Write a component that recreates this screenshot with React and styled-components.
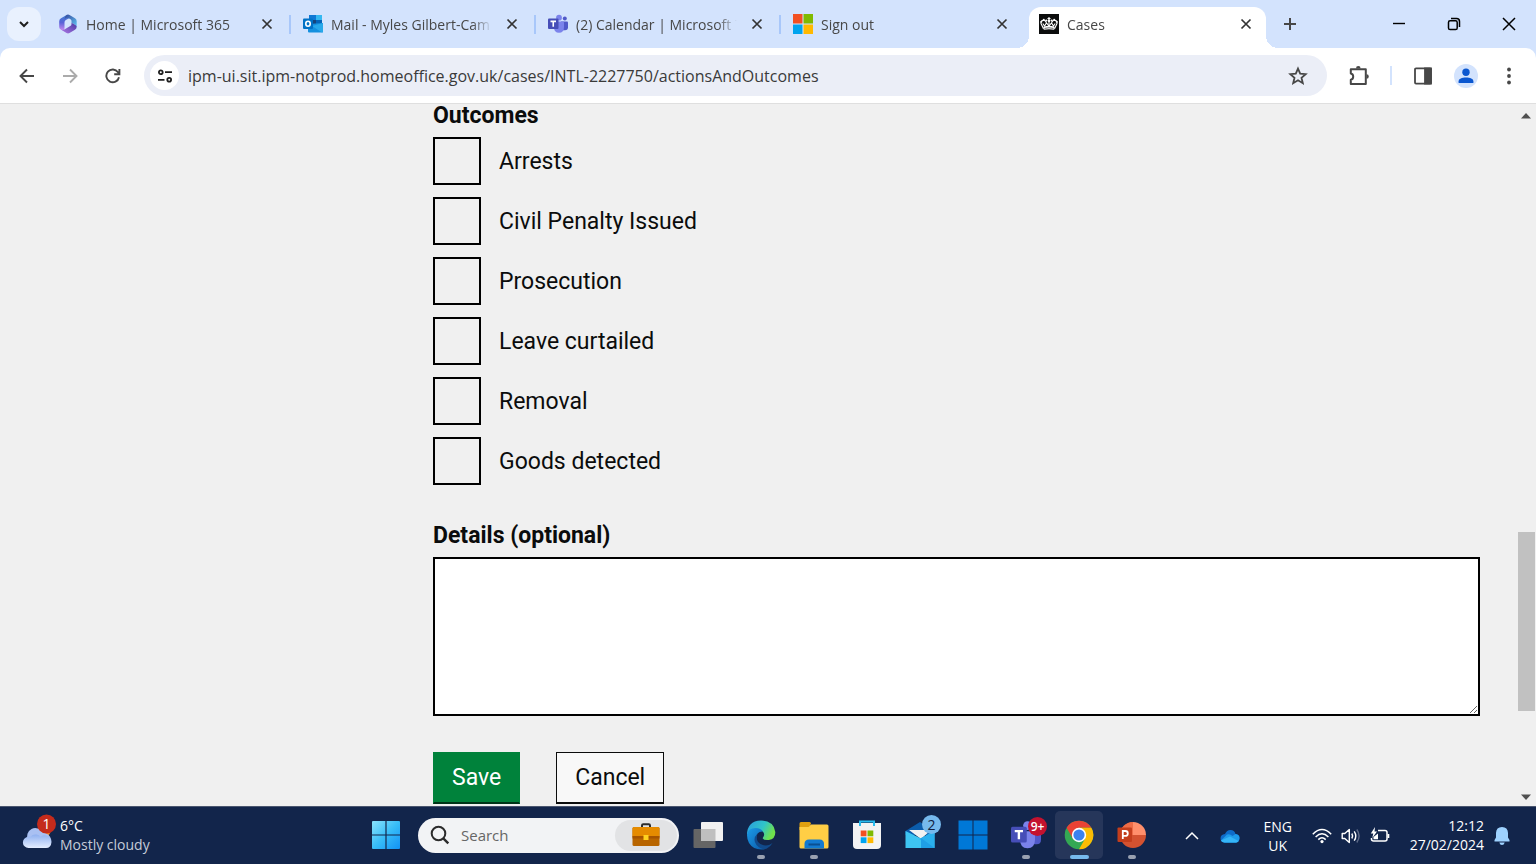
import React, { useState } from "react";
import styled, { createGlobalStyle, css } from "styled-components";

const OUTCOMES = [
    "Arrests",
    "Civil Penalty Issued",
    "Prosecution",
    "Leave curtailed",
    "Removal",
    "Goods detected",
];

const App = () => {
    const [checked, setChecked] = useState({});
    const [details, setDetails] = useState("");

    const toggle = (name) => {
        setChecked({ ...checked, [name]: !checked[name] });
    }

    return (
        <>
            <GlobalStyle />

            <Screen>
                <TabStrip>
                    <TabSearch aria-label="Search tabs">
                        <svg width="12" height="12" viewBox="0 0 12 12" fill="none" stroke="#1f1f1f" strokeWidth="2">
                            <path d="M2 4l4 4 4-4" />
                        </svg>
                    </TabSearch>

                    <Tabs>
                        <BrowserTab icon={<M365Icon />} title="Home | Microsoft 365" />
                        <BrowserTab icon={<OutlookIcon />} title="Mail - Myles Gilbert-Cam" />
                        <BrowserTab icon={<TeamsIcon size={20} />} title="(2) Calendar | Microsoft T" />
                        <BrowserTab icon={<MicrosoftIcon />} title="Sign out" last />
                        <BrowserTab icon={<CrownIcon />} title="Cases" active />
                    </Tabs>

                    <NewTab aria-label="New tab">
                        <svg width="14" height="14" viewBox="0 0 14 14" stroke="#474747" strokeWidth="2">
                            <path d="M7 1v12M1 7h12" />
                        </svg>
                    </NewTab>

                    <WindowControls>
                        <WindowButton aria-label="Minimise">
                            <svg width="14" height="14" viewBox="0 0 14 14" stroke="#000" strokeWidth="1.4">
                                <path d="M1 6.5h12" />
                            </svg>
                        </WindowButton>
                        <WindowButton aria-label="Restore">
                            <svg width="14" height="14" viewBox="0 0 14 14" fill="none" stroke="#000" strokeWidth="1.5">
                                <rect x="1.5" y="3.8" width="8.7" height="8.7" rx="1.6" />
                                <path d="M4 1.6h5.6a2.9 2.9 0 0 1 2.9 2.9V10" />
                            </svg>
                        </WindowButton>
                        <WindowButton aria-label="Close">
                            <svg width="14" height="14" viewBox="0 0 14 14" stroke="#000" strokeWidth="1.5">
                                <path d="M1 1l12 12M13 1L1 13" />
                            </svg>
                        </WindowButton>
                    </WindowControls>
                </TabStrip>

                <Toolbar>
                    <ToolButton aria-label="Back">
                        <svg width="16" height="16" viewBox="0 0 16 16" fill="none" stroke="#474747" strokeWidth="1.9">
                            <path d="M15 8H2M8 1.5L1.5 8 8 14.5" />
                        </svg>
                    </ToolButton>
                    <ToolButton aria-label="Forward">
                        <svg width="16" height="16" viewBox="0 0 16 16" fill="none" stroke="#ababab" strokeWidth="1.9">
                            <path d="M1 8h13M8 1.5L14.5 8 8 14.5" />
                        </svg>
                    </ToolButton>
                    <ToolButton aria-label="Reload">
                        <svg width="16" height="16" viewBox="0 0 16 16" fill="none" stroke="#474747" strokeWidth="1.9">
                            <path d="M14 9.2A6.4 6.4 0 1 1 13 4.2L14.4 6M14.4 1v5.2H9.2" />
                        </svg>
                    </ToolButton>

                    <AddressBar>
                        <SiteInfo aria-label="View site information">
                            <svg width="16" height="16" viewBox="0 0 16 16" fill="none" stroke="#1f1f1f" strokeWidth="1.8">
                                <circle cx="3.8" cy="4.2" r="1.9" />
                                <path d="M8 4.2h7M1 11.8h6.5" />
                                <circle cx="12.2" cy="11.8" r="1.9" />
                            </svg>
                        </SiteInfo>
                        <AddressInput
                            aria-label="Address"
                            defaultValue="ipm-ui.sit.ipm-notprod.homeoffice.gov.uk/cases/INTL-2227750/actionsAndOutcomes"
                        />
                        <StarButton aria-label="Bookmark this tab">
                            <svg width="20" height="20" viewBox="0 0 20 20" fill="none" stroke="#474747" strokeWidth="1.8">
                                <path d="M10 2.6l2.2 5 5.5.5-4.2 3.7 1.3 5.4-4.8-2.9-4.8 2.9 1.3-5.4L2.3 8.1l5.5-.5z" />
                            </svg>
                        </StarButton>
                    </AddressBar>

                    <ToolActions>
                        <ToolButton aria-label="Extensions">
                            <svg width="22" height="22" viewBox="0 0 22 22" fill="none" stroke="#474747" strokeWidth="2">
                                <path d="M2.8 4.2h15V19h-15v-4.200c3.2-.4 3.2-6 0-6.4z" strokeLinejoin="round" />
                                <path d="M8 3.4a2.3 2.3 0 0 1 4.6 0zM18.500 9.200a2.300 2.300 0 0 1 0 4.600z" fill="#474747" stroke="none" />
                            </svg>
                        </ToolButton>
                        <ToolDivider />
                        <ToolButton aria-label="Side panel">
                            <svg width="18" height="18" viewBox="0 0 18 18" fill="none" stroke="#474747" strokeWidth="1.8">
                                <rect x="1" y="1.4" width="16" height="15.2" rx="1" />
                                <path d="M11 1.4h6v15.2h-6z" fill="#474747" />
                            </svg>
                        </ToolButton>
                        <ProfileButton aria-label="Profile">
                            <svg width="16" height="16" viewBox="0 0 16 16" fill="#0b57d0">
                                <circle cx="8" cy="4.3" r="3.7" />
                                <path d="M.6 15v-1.800C.6 10.600 4 9.400 8 9.400s7.400 1.200 7.400 3.800V15z" />
                            </svg>
                        </ProfileButton>
                        <ToolButton aria-label="Menu">
                            <svg width="18" height="18" viewBox="0 0 18 18" fill="#474747">
                                <circle cx="9" cy="2.5" r="1.9" />
                                <circle cx="9" cy="9" r="1.9" />
                                <circle cx="9" cy="15.5" r="1.9" />
                            </svg>
                        </ToolButton>
                    </ToolActions>
                </Toolbar>

                <Viewport>
                    <Page>
                        <Form onSubmit={(e) => e.preventDefault()}>
                            <Fieldset>
                                <Legend>Outcomes</Legend>
                                <CheckList>
                                    {OUTCOMES.map((name) => (
                                        <CheckRow key={name}>
                                            <CheckBox
                                                type="checkbox"
                                                checked={!!checked[name]}
                                                onChange={() => toggle(name)}
                                            />
                                            <CheckText>{name}</CheckText>
                                        </CheckRow>
                                    ))}
                                </CheckList>
                            </Fieldset>

                            <DetailsLabel htmlFor="details">Details (optional)</DetailsLabel>
                            <DetailsBox
                                id="details"
                                value={details}
                                onChange={(e) => setDetails(e.target.value)}
                            />

                            <ButtonRow>
                                <SaveButton type="submit">Save</SaveButton>
                                <CancelButton type="button">Cancel</CancelButton>
                            </ButtonRow>
                        </Form>
                    </Page>

                    <ScrollBar>
                        <svg width="10" height="6" viewBox="0 0 10 6" fill="#505050"><path d="M0 5.5L5 0l5 5.5z" /></svg>
                        <ScrollTrack>
                            <ScrollThumb />
                        </ScrollTrack>
                        <svg width="10" height="6" viewBox="0 0 10 6" fill="#505050"><path d="M0 .5L5 6l5-5.5z" /></svg>
                    </ScrollBar>
                </Viewport>

                <TaskBar>
                    <Weather>
                        <WeatherIcon />
                        <WeatherInfo>
                            6°C
                            <WeatherText>Mostly cloudy</WeatherText>
                        </WeatherInfo>
                    </Weather>

                    <TaskApps>
                        <TaskApp aria-label="Start"><StartIcon /></TaskApp>
                        <SearchBox>
                            <svg width="20" height="20" viewBox="0 0 20 20" fill="none" stroke="#2b2b2b" strokeWidth="2">
                                <circle cx="8.5" cy="8.5" r="6.8" />
                                <path d="M13.3 13.3l5 5" strokeWidth="2.4" />
                            </svg>
                            <SearchInput aria-label="Search" placeholder="Search" />
                            <SearchHighlight><BriefcaseIcon /></SearchHighlight>
                        </SearchBox>
                        <TaskApp aria-label="Task view"><TaskViewIcon /></TaskApp>
                        <TaskApp aria-label="Edge" $running><EdgeIcon /></TaskApp>
                        <TaskApp aria-label="File Explorer" $running><ExplorerIcon /></TaskApp>
                        <TaskApp aria-label="Store"><StoreIcon /></TaskApp>
                        <TaskApp aria-label="Mail"><MailIcon /><Badge>2</Badge></TaskApp>
                        <TaskApp aria-label="Windows"><WindowsIcon /></TaskApp>
                        <TaskApp aria-label="Teams" $running><TeamsIcon size={30} /><Badge $alert>9+</Badge></TaskApp>
                        <TaskApp aria-label="Chrome" $running $focused><ChromeIcon /></TaskApp>
                        <TaskApp aria-label="PowerPoint" $running><PowerPointIcon /></TaskApp>
                    </TaskApps>

                    <Tray>
                        <TrayButton aria-label="Show hidden icons">
                            <svg width="14" height="14" viewBox="0 0 14 14" fill="none" stroke="#fff" strokeWidth="1.5">
                                <path d="M1 10l6-6 6 6" />
                            </svg>
                        </TrayButton>
                        <TrayButton aria-label="OneDrive"><OneDriveIcon /></TrayButton>
                        <Language>ENG<br />UK</Language>
                        <Status aria-label="Network, volume and battery">
                            <WifiIcon />
                            <VolumeIcon />
                            <BatteryIcon />
                        </Status>
                        <Clock>12:12<br />27/02/2024</Clock>
                        <TrayButton aria-label="Notifications"><BellIcon /></TrayButton>
                    </Tray>
                </TaskBar>
            </Screen>
        </>
    )
}

export default App;

const BrowserTab = ({ icon, title, active, last }) => (
    <Tab $active={active} $last={last}>
        <TabLink href="#">
            {icon}
            <TabTitle>{title}</TabTitle>
        </TabLink>
        <TabClose aria-label={"Close " + title}>
            <svg width="12" height="12" viewBox="0 0 12 12" stroke="#333" strokeWidth="1.7">
                <path d="M1.5 1.5l9 9M10.5 1.5l-9 9" />
            </svg>
        </TabClose>
    </Tab>
)

/* icons */

const M365Icon = () => (
    <svg width="20" height="20" viewBox="0 0 20 20">
        <defs>
            <linearGradient id="m1" x1="0" y1="0" x2="0" y2="1">
                <stop offset="0" stopColor="#3f7fd0" />
                <stop offset=".5" stopColor="#5a62d8" />
                <stop offset="1" stopColor="#c98af0" />
            </linearGradient>
            <linearGradient id="m2" x1="0" y1="0" x2="1" y2="1">
                <stop offset="0" stopColor="#33459c" />
                <stop offset="1" stopColor="#62c8f5" />
            </linearGradient>
            <linearGradient id="m3" x1="0" y1="1" x2="1" y2="0">
                <stop offset="0" stopColor="#b07be8" />
                <stop offset="1" stopColor="#4636a0" />
            </linearGradient>
        </defs>
        <path d="M9 .8L3 4.2Q1.200 5.300 1.200 7.300v5.600q0 1.600 1.500 2.500l1.500.8Q6.500 17 6.500 14V8.500q0-1.600 1.400-2.400L11.500 4z" fill="url(#m1)" />
        <path d="M9 .8q1.200-.6 2.500.1L17 4.200q1.700 1 1.700 3v6.200q-.3-1.800-1.700-2.600L13.500 8.700V7q0-1.200-1-1.800l-1.800-1Q8 3 6.500 5.500 6.700 2 9 .8z" fill="url(#m2)" />
        <path d="M18.700 12.500q0 2.300-1.700 3.300l-5.500 3.200q-1.500.8-3 0l-5.700-3.400q2 .8 3.600-.1l5.900-3.400q1.200-.7 1.200-2.100V8.700l3.500 2.100q1.200.7 1.700 1.700z" fill="url(#m3)" />
    </svg>
)

const OutlookIcon = () => (
    <svg width="20" height="20" viewBox="0 0 20 20">
        <rect x="6" y="1" width="13" height="11" rx="1" fill="#28a8ea" />
        <path d="M6 1h7v5H6z" fill="#0f78d4" />
        <path d="M13 1h6v5h-6z" fill="#35b8f1" />
        <path d="M6 6h7v5H6z" fill="#14447d" />
        <path d="M13 6h6v5h-6z" fill="#0364b8" />
        <path d="M5 10l15-1v8.500q0 1-1 1H6q-1 0-1-1z" fill="#1490df" />
        <path d="M20 9v9q-.5.5-1 .5L9 12z" fill="#28a8ea" />
        <rect y="4.5" width="10" height="10.5" rx="1" fill="#0072c6" />
        <ellipse cx="5" cy="9.7" rx="2.2" ry="2.5" fill="none" stroke="#fff" strokeWidth="1.6" />
    </svg>
)

const TeamsIcon = ({ size }) => (
    <svg width={size} height={size} viewBox="0 0 20 20">
        <circle cx="16.8" cy="4.5" r="2" fill="#5059c9" />
        <path d="M13 7.500h6q1 0 1 1v4.700q0 3-3 3h-3z" fill="#5059c9" />
        <circle cx="11" cy="3.7" r="2.9" fill="#7b83eb" />
        <path d="M6 7.500h9q1 0 1 1V13q0 5.800-5 5.800T6 13z" fill="#7b83eb" />
        <rect y="4.5" width="10.5" height="10.5" rx="1" fill="#464eb8" />
        <path d="M2.500 7.400H8M5.250 7.400v5.400" stroke="#fff" strokeWidth="1.6" />
    </svg>
)

const MicrosoftIcon = () => (
    <svg width="20" height="20" viewBox="0 0 20 20">
        <path d="M0 0h9.500v9.500H0z" fill="#f25022" />
        <path d="M10.500 0H20v9.500h-9.500z" fill="#7fba00" />
        <path d="M0 10.500h9.500V20H0z" fill="#00a4ef" />
        <path d="M10.500 10.500H20V20h-9.500z" fill="#ffb900" />
    </svg>
)

const CrownIcon = () => (
    <svg width="20" height="20" viewBox="0 0 20 20">
        <path d="M0 0h20v20H0z" fill="#0b0c0c" />
        <g fill="none" stroke="#fff" strokeWidth="1.1">
            <path d="M4.500 14.800L2 9.600Q1.500 7 4 6.200q2.800 0 3.300 2.500M15.500 14.800L18 9.600q.5-2.600-2-3.400-2.800 0-3.300 2.500" />
            <path d="M10 3v9M8.500 4.500h3" />
            <path d="M3.800 9.500l1.700 2.500L7.500 9l2.500 3 2.500-3 2 3 1.700-2.500" />
        </g>
        <path d="M4.300 12.800q5.700-2 11.400 0l-.5 3q-5.200-1.300-10.400 0z" fill="#fff" />
        <path d="M5.500 14.400q4.500-1.200 9 0" fill="none" stroke="#0b0c0c" strokeWidth=".6" />
        <g fill="#fff">
            <circle cx="2.3" cy="7.8" r="1" /><circle cx="4.8" cy="5.8" r="1" /><circle cx="7.3" cy="6.5" r="1" />
            <circle cx="10" cy="6.8" r="1.4" />
            <circle cx="12.7" cy="6.5" r="1" /><circle cx="15.2" cy="5.8" r="1" /><circle cx="17.7" cy="7.8" r="1" />
        </g>
    </svg>
)

const WeatherIcon = () => (
    <svg width="34" height="44" viewBox="0 0 34 44">
        <defs>
            <linearGradient id="cloud" x1="0" y1="0" x2="0" y2="1">
                <stop offset="0" stopColor="#8fb0f0" />
                <stop offset="1" stopColor="#e4edff" />
            </linearGradient>
        </defs>
        <circle cx="22" cy="17" r="6.5" fill="#f58220" />
        <path d="M6 26a7.500 7.500 0 0 1 14.500-7.500Q28 19 29 26z" fill="#a9c0f2" />
        <path d="M6.500 34a5.600 5.600 0 0 1 0-11.200h2q2-2.800 6-2.300 3 .5 4 2.300 2-2.300 5.500-1.300 5.500 1 5.500 6.500-.5 6-5.500 6z" fill="url(#cloud)" />
        <circle cx="24.5" cy="10" r="9.5" fill="#c42b1c" />
        <text x="24.5" y="15" fontSize="14" textAnchor="middle" fill="#fff">1</text>
    </svg>
)

const StartIcon = () => (
    <svg width="28" height="28" viewBox="0 0 28 28">
        <defs>
            <linearGradient id="start" x1="0" y1="0" x2="1" y2="1">
                <stop offset="0" stopColor="#8be3fc" />
                <stop offset=".5" stopColor="#38bdf8" />
                <stop offset="1" stopColor="#1192f5" />
            </linearGradient>
        </defs>
        <path d="M1 0h12.400v13.400H0V1q0-1 1-1zM14.600 0H27q1 0 1 1v12.400H14.600zM0 14.600h13.400V28H1q-1 0-1-1zM14.600 14.600H28V27q0 1-1 1H14.600z" fill="url(#start)" />
    </svg>
)

const BriefcaseIcon = () => (
    <svg width="28" height="24" viewBox="0 0 28 24">
        <path d="M10 4V2.500q0-1.200 1.200-1.200h5.600q1.200 0 1.200 1.200V4" fill="none" stroke="#2b2b2b" strokeWidth="2" />
        <rect x=".5" y="4" width="27" height="19" rx="1.5" fill="#b86500" />
        <path d="M2 4h24q1.500 0 1.500 1.500V14H.5V5.500Q.5 4 2 4z" fill="#e58b00" />
        <path d="M.5 13h27v2.500H.5z" fill="#a55400" />
        <path d="M11.500 12h5v5h-5z" fill="#ffd21f" />
    </svg>
)

const TaskViewIcon = () => (
    <svg width="30" height="28" viewBox="0 0 30 28">
        <rect x=".5" y="8" width="22" height="19" rx="1" fill="#656565" />
        <rect x="8" y="1" width="22" height="19" rx="1" fill="#f1f1f1" />
        <path d="M8 8h14.500v12H8z" fill="#bfbfbf" />
    </svg>
)

const EdgeIcon = () => (
    <svg width="30" height="30" viewBox="0 0 30 30">
        <defs>
            <linearGradient id="e1" x1="0" y1="0" x2="1" y2=".4">
                <stop offset="0" stopColor="#2a9be0" />
                <stop offset=".6" stopColor="#30c4c8" />
                <stop offset="1" stopColor="#6fe04b" />
            </linearGradient>
            <linearGradient id="e2" x1="0" y1="0" x2="1" y2="1">
                <stop offset="0" stopColor="#1b9ce8" />
                <stop offset="1" stopColor="#0b59a8" />
            </linearGradient>
        </defs>
        <path d="M1 15Q1 1 15 .5 28 1 29.300 12q.2 7-6.500 8-5 .4-6-1.500-.2-.8.8-2 1.400-2.500-.8-4.900Q9 6 1 15z" fill="url(#e1)" />
        <path d="M1 15Q2 8 9.500 8q5.500.2 7.500 3.500-6.500-.5-6.800 6.500.2 8.500 8.800 11.200Q8 31 3 23 1 19.500 1 15z" fill="url(#e2)" />
        <path d="M11.500 13.500q-2.500 7 3 10.500 6 3.500 12-1-2 4-6 5.700-5 1.500-10-3.700-4.500-6 1-11.500z" fill="#114a8b" />
    </svg>
)

const ExplorerIcon = () => (
    <svg width="30" height="28" viewBox="0 0 30 28">
        <path d="M.5 2.500Q.5 1 2 1h8.500q1.500 0 1.500 1.500L10.500 6v3H.5z" fill="#e0a010" />
        <path d="M.5 6H9.500l2.500-2.500H28q1.500 0 1.500 1.500v21q0 1.500-1.500 1.500H2Q.5 27.500.5 26z" fill="#ffce45" />
        <path d="M5.500 27.500V23q0-4.500 4.500-4.500h10.500q4.500 0 4.500 4.500v4.500z" fill="#137ad0" />
        <path d="M9.500 23.500h11.500" stroke="#0b4f91" strokeWidth="2" />
    </svg>
)

const StoreIcon = () => (
    <svg width="30" height="30" viewBox="0 0 30 30">
        <path d="M1 3h28v22q0 4-4 4H5q-4 0-4-4z" fill="#f3f3f3" />
        <path d="M8 6V1.500h14V6" fill="none" stroke="#28bdf0" strokeWidth="2" />
        <path d="M8.700 10.500h5.800v5.800H8.700z" fill="#f25022" />
        <path d="M15.500 10.500h5.800v5.800h-5.800z" fill="#7fba00" />
        <path d="M8.700 17.300h5.800v5.800H8.700z" fill="#00a4ef" />
        <path d="M15.500 17.300h5.800v5.800h-5.800z" fill="#ffb900" />
    </svg>
)

const MailIcon = () => (
    <svg width="30" height="28" viewBox="0 0 30 28">
        <path d="M.5 10L15 1l14.500 9v4H.5z" fill="#0b5cab" />
        <path d="M4 9h22L16 18z" fill="#f2f2f2" />
        <path d="M.5 10L16 17.500 29.500 10v17H.5z" fill="#3ec5f2" />
        <path d="M29.500 10L14 18l15.500 9z" fill="#2ab0ee" />
        <path d="M16 17l13.500 10H16z" fill="#1f9fe6" />
    </svg>
)

const WindowsIcon = () => (
    <svg width="30" height="30" viewBox="0 0 30 30" fill="#0078d7">
        <path d="M.5.5h14v14H.5zM15.500.5h14v14h-14zM.5 15.500h14v14H.5zM15.500 15.500h14v14h-14z" />
    </svg>
)

const ChromeIcon = () => (
    <svg width="30" height="30" viewBox="0 0 30 30">
        <circle cx="15" cy="15" r="14.3" fill="#34a853" />
        <path d="M2.600 7.850A14.300 14.300 0 0 1 27.400 7.850H15L8.810 18.570z" fill="#ea4335" />
        <path d="M27.400 7.850A14.300 14.300 0 0 1 15 29.300l6.200-10.730L15 7.850z" fill="#fbbc04" />
        <circle cx="15" cy="15" r="7.2" fill="#fff" />
        <circle cx="15" cy="15" r="5.6" fill="#3b82f0" />
    </svg>
)

const PowerPointIcon = () => (
    <svg width="30" height="28" viewBox="0 0 30 28">
        <path d="M16 1a13 13 0 1 0 13 13H16z" fill="#d35230" />
        <path d="M16 1a13 13 0 0 1 13 13H16z" fill="#ff8f6b" />
        <path d="M3 14A13 13 0 0 1 16 1v13z" fill="#ed6c47" />
        <rect x=".5" y="6.5" width="14.5" height="14.5" rx="1" fill="#c43e1c" />
        <path d="M5.800 18V10h2.500q2.500 0 2.500 2.400T8.300 14.900H5.800" fill="none" stroke="#fff" strokeWidth="1.8" />
    </svg>
)

const OneDriveIcon = () => (
    <svg width="20" height="14" viewBox="0 0 20 14">
        <path d="M5 5Q7 .8 10.500 1q4 .2 5 4Q19.500 5.500 19.500 9q0 4-3.500 4.500H4.500Q.5 13 .5 9.300.7 5.500 5 5z" fill="#0f6cc9" />
        <path d="M7 5.500q3-1 5.500 1.500L15.500 5q4 .5 4 4-.3 4-3.500 4.500H4.500Q2 13.300 1 11.500z" fill="#1e9bea" />
        <path d="M1 11.500L10 7.500l8.500 4.500q-1 1.500-2.500 1.500H4.500Q2 13.300 1 11.500z" fill="#35b5f7" />
    </svg>
)

const WifiIcon = () => (
    <svg width="20" height="16" viewBox="0 0 20 16" fill="none" stroke="#fff" strokeWidth="1.5">
        <path d="M.8 6.300q9.200-9.400 18.400 0M3.600 9q6.400-6.400 12.800 0M6.300 11.600q3.700-3.600 7.400 0" />
        <circle cx="10" cy="13.6" r="1.6" fill="#fff" stroke="none" />
    </svg>
)

const VolumeIcon = () => (
    <svg width="20" height="18" viewBox="0 0 20 18" fill="none" stroke="#fff" strokeWidth="1.4">
        <path d="M1.200 6.500h2.600L8.300 2.500v13l-4.500-4H1.200z" strokeLinejoin="round" />
        <path d="M10.800 6.500q1.600 2.500 0 5M13.200 4.300q3.200 4.700 0 9.400" />
        <path d="M15.800 2.500q4.600 6.500 0 13" stroke="#5d6a88" />
    </svg>
)

const BatteryIcon = () => (
    <svg width="20" height="18" viewBox="0 0 20 18" fill="none" stroke="#fff" strokeWidth="1.5">
        <path d="M8 3.500h7q2 0 2 2v6.500q0 2-2 2H3.500q-2 0-2-2v-1" />
        <path d="M18.400 7v4" strokeWidth="1.8" />
        <path d="M3.500 12.200V10L8 6.500v5.700z" fill="#fff" stroke="none" />
        <path d="M5 0L.8 6.500h2.500l-1 4.500L7 4.500H4.500z" fill="#fff" stroke="none" />
    </svg>
)

const BellIcon = () => (
    <svg width="16" height="20" viewBox="0 0 16 20" fill="#9ed2ff">
        <path d="M8 1Q2.200 1.200 2 7v4.500L.5 14v1.500h15V14L14 11.500V7Q13.800 1.200 8 1zM5.300 16.500h5.400Q10 19 8 19t-2.700-2.500z" />
    </svg>
)

/* styles */

const GlobalStyle = createGlobalStyle`
    * {
        box-sizing: border-box;
    }

    body {
        margin: 0;
        font-family: "Open Sans", "Noto Sans", sans-serif;
        overflow: hidden;
    }

    button, input, textarea {
        font: inherit;
        color: inherit;
    }

    button {
        padding: 0;
        border: none;
        background: none;
        cursor: pointer;
    }

    svg {
        display: block;
        flex-shrink: 0;
    }
`

const Screen = styled.div`
    height: 100vh;
    display: flex;
    flex-direction: column;
    background: #d3e3fd;
`

const TabStrip = styled.div`
    height: 48px;
    flex-shrink: 0;
    display: flex;
    align-items: center;
    padding-left: 7px;
`

const TabSearch = styled.button`
    width: 34px;
    height: 34px;
    flex-shrink: 0;
    display: flex;
    justify-content: center;
    align-items: center;
    border-radius: 12px;
    background: #e9f1fe;
`

const Tabs = styled.div`
    flex: 0 1 1225px;
    min-width: 0;
    align-self: stretch;
    display: flex;
    padding-top: 7px;
    margin-left: 5px;
`

const activeTab = css`
    flex-basis: 237px;
    background: #fff;
    border-radius: 12px 12px 0 0;
    margin: 0 5px 0 3px;
    padding: 0 10px 7px;

    &::before, &::after {
        content: "";
        position: absolute;
        bottom: 0;
        width: 12px;
        height: 12px;
    }

    &::before {
        left: -12px;
        background: radial-gradient(circle at 0 0, transparent 12px, #fff 12px);
    }

    &::after {
        right: -12px;
        background: radial-gradient(circle at 100% 0, transparent 12px, #fff 12px);
    }
`

const Tab = styled.div`
    position: relative;
    flex: 0 1 245px;
    min-width: 0;
    display: flex;
    align-items: center;
    gap: 10px;
    padding: 0 14px 7px 12px;
    font-size: 14px;
    color: #474747;

    &:not(:last-child)::after {
        content: "";
        width: 2px;
        height: 19px;
        margin: 0 -14px 0 2px;
        background: ${(props) => (props.$last ? "transparent" : "#a8c7fa")};
    }

    ${(props) => props.$active && activeTab}
`

const TabLink = styled.a`
    flex: 1;
    min-width: 0;
    display: flex;
    align-items: center;
    gap: 8px;
    color: inherit;
    text-decoration: none;
`

const TabTitle = styled.span`
    flex: 1;
    padding-top: 2px;
    overflow: hidden;
    white-space: nowrap;
    line-height: 20px;
    mask-image: linear-gradient(90deg, #000 calc(100% - 20px), transparent);
`

const TabClose = styled.button`
    width: 20px;
    height: 20px;
    display: flex;
    justify-content: center;
    align-items: center;
`

const NewTab = styled.button`
    width: 38px;
    height: 34px;
    display: flex;
    justify-content: center;
    align-items: center;
`

const WindowControls = styled.div`
    margin-left: auto;
    display: flex;
`

const WindowButton = styled.button`
    width: 55px;
    height: 47px;
    display: flex;
    justify-content: center;
    align-items: center;
`

const Toolbar = styled.div`
    height: 56px;
    flex-shrink: 0;
    display: flex;
    align-items: center;
    gap: 9px;
    padding: 0 10px;
    background: #fff;
    border-bottom: 1px solid #dfdfdf;
    border-radius: 10px 10px 0 0;
`

const ToolButton = styled.button`
    width: 34px;
    height: 34px;
    display: flex;
    justify-content: center;
    align-items: center;
`

const AddressBar = styled.div`
    flex: 1;
    min-width: 0;
    height: 41px;
    margin-left: 5px;
    padding: 0 12px 0 6px;
    display: flex;
    align-items: center;
    border-radius: 21px;
    background: #ebeef7;
`

const SiteInfo = styled.button`
    width: 29px;
    height: 29px;
    display: flex;
    justify-content: center;
    align-items: center;
    border-radius: 50%;
    background: #fff;
`

const AddressInput = styled.input`
    flex: 1;
    min-width: 0;
    padding: 0 9px;
    border: none;
    outline: none;
    background: transparent;
    font-size: 16px;
    color: #3a3a3a;
`

const StarButton = styled.button`
    width: 34px;
    height: 34px;
    display: flex;
    justify-content: center;
    align-items: center;
`

const ToolActions = styled.div`
    display: flex;
    align-items: center;
    margin-left: 6px;
    gap: 9px;
`

const ToolDivider = styled.div`
    width: 2px;
    height: 19px;
    margin: 0 5px;
    background: #d3e3fd;
`

const ProfileButton = styled.button`
    width: 24px;
    height: 24px;
    margin: 0 5px;
    display: flex;
    justify-content: center;
    align-items: center;
    border-radius: 50%;
    background: #d3e3fd;
`

const Viewport = styled.div`
    flex: 1;
    min-height: 0;
    display: flex;
    overflow: hidden;
    background: #f0f0f0;
`

const Page = styled.main`
    flex: 1;
    padding: 0 36px;
    display: grid;
    grid-template-columns: 361px minmax(0, 1fr);
    column-gap: 36px;
    font-family: Roboto, sans-serif;
    font-size: 23px;
    line-height: 30px;
    color: #0b0c0c;
`

const Form = styled.form`
    grid-column: 2;
    display: flex;
    flex-direction: column;
`

const Fieldset = styled.fieldset`
    margin: 0 0 36px;
    padding: 0;
    border: none;
`

const Legend = styled.legend`
    height: 33px;
    padding: 0;
    line-height: 23px;
    font-weight: 700;
`

const CheckList = styled.div`
    display: flex;
    flex-direction: column;
    gap: 12px;
`

const CheckRow = styled.label`
    align-self: flex-start;
    display: flex;
    align-items: center;
    gap: 18px;
`

const CheckBox = styled.input`
    appearance: none;
    width: 48px;
    height: 48px;
    margin: 0;
    border: 2px solid #000;

    &:checked {
        box-shadow: inset 0 0 0 10px #f0f0f0;
        background: #0b0c0c;
    }
`

const CheckText = styled.span`
    padding-top: 2px;
`

const DetailsLabel = styled.label`
    margin-bottom: 6px;
    font-weight: 700;
`

const DetailsBox = styled.textarea`
    width: 100%;
    height: 159px;
    padding: 6px;
    border: 2px solid #000;
    background: #fff;
    resize: vertical;
`

const ButtonRow = styled.div`
    display: flex;
    gap: 36px;
    margin-top: 36px;
`

const FormButton = styled.button`
    height: 52px;
    padding: 0 18px;
    border: 1px solid;
    border-bottom-width: 2px;
`

const SaveButton = styled(FormButton)`
    color: #fff;
    background: #00823b;
    border-color: #00823b #00823b #003418;
`

const CancelButton = styled(FormButton)`
    background: #f8f8f8;
    border-color: #0b0c0c;
`

const ScrollBar = styled.div`
    width: 20px;
    padding: 9px 0 6px;
    display: flex;
    flex-direction: column;
    align-items: center;
`

const ScrollTrack = styled.div`
    flex: 1;
    align-self: stretch;
    display: flex;
    flex-direction: column;
    justify-content: flex-end;
    align-items: center;
    padding-bottom: 83px;
`

const ScrollThumb = styled.div`
    width: 17px;
    height: 179px;
    background: #c1c1c1;
`

const TaskBar = styled.footer`
    height: 58px;
    flex-shrink: 0;
    display: grid;
    grid-template-columns: 362px auto 1fr;
    align-items: center;
    background: #12254b;
    border-top: 1px solid #4a566f;
    color: #fff;
    font-size: 14px;
    line-height: 19px;
`

const Weather = styled.button`
    display: flex;
    align-items: center;
    gap: 4px;
    padding-left: 22px;
    text-align: left;
`

const WeatherInfo = styled.span`
    padding-bottom: 2px;
`

const WeatherText = styled.span`
    display: block;
    color: #c5cbd8;
`

const TaskApps = styled.div`
    display: flex;
    align-items: center;
    gap: 5px;
    padding-bottom: 1px;
`

const TaskApp = styled.button`
    position: relative;
    width: 48px;
    height: 48px;
    display: flex;
    justify-content: center;
    align-items: center;
    border-radius: 5px;
    background: ${(props) => (props.$focused ? "#26365a" : "none")};

    ${(props) => props.$running && css`
        &::after {
            content: "";
            position: absolute;
            bottom: 0;
            width: ${props.$focused ? "19px" : "8px"};
            height: 4px;
            border-radius: 2px;
            background: ${props.$focused ? "#76b9ed" : "#99a1b1"};
        }
    `}
`

const Badge = styled.span`
    position: absolute;
    top: 4px;
    right: 3px;
    min-width: 19px;
    height: 19px;
    border-radius: 10px;
    font-size: 14px;
    line-height: 19px;
    text-align: center;
    background: #76b9ed;
    color: #10203f;

    ${(props) => props.$alert && css`
        top: 6px;
        background: #c4122f;
        color: #fff;
        font-size: 12px;
        font-weight: 600;
    `}
`

const SearchBox = styled.div`
    width: 261px;
    height: 35px;
    margin-left: 3px;
    padding: 2px 2px 2px 12px;
    display: flex;
    align-items: center;
    gap: 11px;
    border-radius: 18px;
    background: #f2f3f5;
`

const SearchInput = styled.input`
    flex: 1;
    min-width: 0;
    padding: 0;
    border: none;
    outline: none;
    background: transparent;
    font-size: 15px;
    color: #333;

    &::placeholder {
        color: #666;
        opacity: 1;
    }
`

const SearchHighlight = styled.div`
    width: 62px;
    height: 31px;
    display: flex;
    justify-content: center;
    align-items: center;
    border-radius: 16px;
    background: #e2e3e5;
`

const Tray = styled.div`
    display: flex;
    align-items: center;
    justify-content: flex-end;
    padding-right: 20px;
`

const TrayButton = styled.button`
    min-width: 28px;
    height: 48px;
    display: flex;
    justify-content: center;
    align-items: center;

    &:first-child {
        margin-right: 10px;
    }
`

const Language = styled.button`
    width: 68px;
    text-align: center;
`

const Status = styled.button`
    height: 48px;
    display: flex;
    align-items: center;
    gap: 9px;
    margin-right: 20px;
`

const Clock = styled.button`
    text-align: right;
    margin-right: 4px;
    padding-bottom: 2px;
`
